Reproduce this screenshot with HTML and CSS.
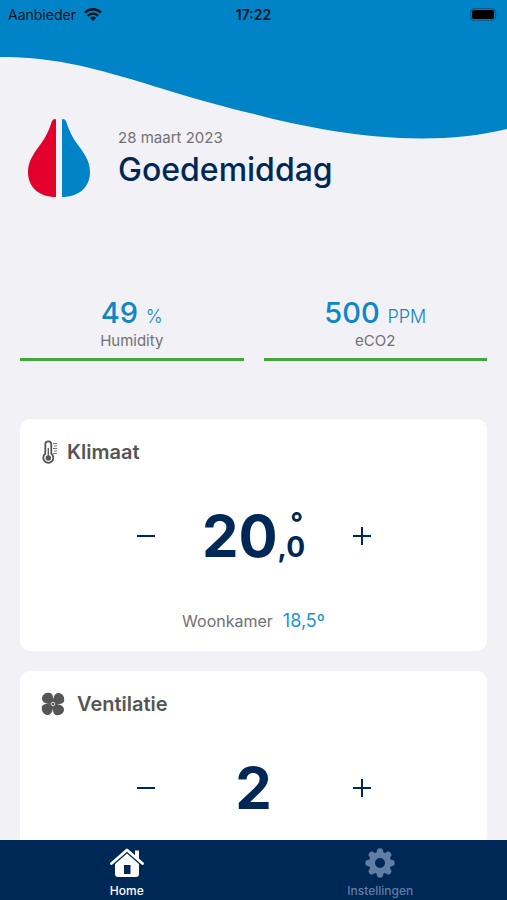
FILE: index.html
```html
<!DOCTYPE html>
<html lang="nl">
<head>
  <meta charset="utf-8">
  <meta name="viewport" content="width=device-width, initial-scale=1">
  <title>Home</title>
  <link rel="stylesheet" href="styles.css">
</head>
<body>
  <div class="app">
    <svg class="wave" viewBox="0 0 507 142" preserveAspectRatio="none" aria-hidden="true">
      <path d="M0 0H507V129C425 149 330 134 254 114C140 87 90 57 0 57Z"/>
    </svg>

    <header class="status">
      <div class="carrier">
        <span>Aanbieder</span>
        <svg class="wifi" viewBox="0 0 18 13" aria-hidden="true">
          <path d="M1 4.6A11.4 11.4 0 0 1 17 4.6M3.8 7.8A7.4 7.4 0 0 1 14.2 7.8" fill="none" stroke="#08131c" stroke-width="2.4"/>
          <path d="M9 13L6 10A4.4 4.4 0 0 1 12 10Z" fill="#08131c"/>
        </svg>
      </div>
      <time class="clock">17:22</time>
      <svg class="battery" viewBox="0 0 29 13" aria-hidden="true">
        <rect x=".7" y=".7" width="24.6" height="11.6" rx="3.6" fill="none" stroke="#075f94" stroke-width="1.3"/>
        <rect x="2" y="2" width="22" height="9" rx="2" fill="#000"/>
        <path d="M27 4.5q1.6 2 0 4z" fill="#075f94"/>
      </svg>
    </header>

    <main class="content">
      <section class="greeting">
        <svg class="logo" viewBox="0 0 64 80" aria-hidden="true">
          <path fill="#e4002d" d="M29 2V79C12 79 1 69 1 54C1 43 7 35 13 27C19 19 22 12 25 3Q26 1 28 1Q29 1 29 2Z"/>
          <path fill="#0084c7" d="M35 2V79C52 79 63 69 63 54C63 43 57 35 51 27C45 19 42 12 39 3Q38 1 36 1Q35 1 35 2Z"/>
        </svg>
        <div class="welcome">
          <p class="date">28 maart 2023</p>
          <h1 class="title">Goedemiddag</h1>
        </div>
      </section>

      <section class="stats">
        <div class="stat">
          <p class="reading">49 <span class="unit">%</span></p>
          <p class="label">Humidity</p>
        </div>
        <div class="stat">
          <p class="reading">500 <span class="unit">PPM</span></p>
          <p class="label">eCO2</p>
        </div>
      </section>

      <section class="card">
        <h2 class="card-title">
          <svg class="thermo" viewBox="0 0 16 24" aria-hidden="true">
            <path d="M4.300 13.800V4.300a3 3 0 0 1 6 0v9.500a5 5 0 1 1-6 0Z" fill="none" stroke="#555" stroke-width="1.8"/>
            <path d="M7.300 8V16" stroke="#555" stroke-width="1.3"/>
            <circle cx="7.300" cy="18" r="2.700" fill="#555"/>
            <path d="M12 3.500h4M13 6h3M12 8.500h4M13 11h3M12 13.500h4" stroke="#777" stroke-width="1"/>
          </svg>
          Klimaat
        </h2>
        <div class="stepper">
          <button class="step" type="button" aria-label="Lager">
            <svg viewBox="0 0 18 18"><path d="M0 9H18"/></svg>
          </button>
          <div class="value">20<span class="decimal"><span class="degree">°</span><span>,0</span></span></div>
          <button class="step" type="button" aria-label="Hoger">
            <svg viewBox="0 0 18 18"><path d="M0 9H18M9 0V18"/></svg>
          </button>
        </div>
        <p class="room">Woonkamer <span class="room-temp">18,5º</span></p>
      </section>

      <section class="card">
        <h2 class="card-title wide">
          <svg class="fan" viewBox="0 0 24 24" aria-hidden="true">
            <g fill="#555">
              <path id="blade" d="M12 12C8 12.500 1 11.500 1 6.500C1 2.500 5 .5 8.500 .8C12.500 1.200 12.300 7 12 12Z"/>
              <use href="#blade" transform="rotate(90 12 12)"/>
              <use href="#blade" transform="rotate(180 12 12)"/>
              <use href="#blade" transform="rotate(270 12 12)"/>
            </g>
            <circle cx="12" cy="12" r="1.800" fill="#555" stroke="#ddd" stroke-width="1"/>
          </svg>
          Ventilatie
        </h2>
        <div class="stepper">
          <button class="step" type="button" aria-label="Lager">
            <svg viewBox="0 0 18 18"><path d="M0 9H18"/></svg>
          </button>
          <div class="value">2</div>
          <button class="step" type="button" aria-label="Hoger">
            <svg viewBox="0 0 18 18"><path d="M0 9H18M9 0V18"/></svg>
          </button>
        </div>
      </section>
    </main>

    <nav class="tabs">
      <a class="tab active" href="#home">
        <svg viewBox="0 0 34 32" aria-hidden="true">
          <path d="M1.500 16.500L17 3L32.500 16.500" fill="none" stroke="currentColor" stroke-width="2.800" stroke-linecap="round" stroke-linejoin="round"/>
          <path d="M25 3.500H29V12L25 8.500Z" fill="currentColor"/>
          <path fill="currentColor" fill-rule="evenodd" d="M17 6.500L29 17V27Q29 30 26 30H8Q5 30 5 27V17ZM14 18V27H20.500V18Z"/>
        </svg>
        Home
      </a>
      <a class="tab" href="#instellingen">
        <svg viewBox="0 0 34 32" aria-hidden="true">
          <g fill="currentColor">
            <path id="tooth" d="M13 7L14.500 2Q17 .5 19.500 2L21 7Z"/>
            <use href="#tooth" transform="rotate(45 17 16)"/>
            <use href="#tooth" transform="rotate(90 17 16)"/>
            <use href="#tooth" transform="rotate(135 17 16)"/>
            <use href="#tooth" transform="rotate(180 17 16)"/>
            <use href="#tooth" transform="rotate(225 17 16)"/>
            <use href="#tooth" transform="rotate(270 17 16)"/>
            <use href="#tooth" transform="rotate(315 17 16)"/>
          </g>
          <circle cx="17" cy="16" r="8" fill="none" stroke="currentColor" stroke-width="6"/>
        </svg>
        Instellingen
      </a>
    </nav>
  </div>
</body>
</html>
```
FILE: styles.css
```css
* {
  box-sizing: border-box;
}

body,
h1,
h2,
p {
  margin: 0;
}

body {
  font-family: Inter, "Liberation Sans", sans-serif;
  background: #f1f1f6;
  color: #707076;
}

.app {
  position: relative;
  display: flex;
  flex-direction: column;
  height: 100vh;
}

.wave {
  position: absolute;
  top: 0;
  left: 0;
  width: 100%;
  height: 142px;
  fill: #0084c7;
}

.status {
  position: relative;
  display: grid;
  grid-template-columns: 1fr auto 1fr;
  align-items: center;
  flex: none;
  height: 28px;
  padding: 0 8px;
  font-size: 14px;
  color: #08131c;
}

.carrier {
  display: flex;
  align-items: center;
  gap: 8px;
}

.wifi {
  width: 18px;
  height: 13px;
}

.clock {
  font-weight: 600;
}

.battery {
  width: 29px;
  height: 13px;
  justify-self: end;
}

.content {
  position: relative;
  flex: 1;
  min-height: 0;
  overflow: hidden;
  padding: 90px 20px 0;
}

.greeting {
  display: flex;
  align-items: center;
  gap: 27px;
  padding-left: 7px;
}

.logo {
  flex: none;
  width: 64px;
  height: 80px;
}

.welcome {
  padding-top: 4px;
}

.date {
  font-size: 15px;
  line-height: 20px;
}

.title {
  font-size: 32px;
  font-weight: 500;
  line-height: 44px;
  color: #002856;
}

.stats {
  display: grid;
  grid-template-columns: 1fr 1fr;
  gap: 20px;
  margin-top: 101px;
}

.stat {
  padding-bottom: 7px;
  border-bottom: 3px solid #41a83e;
  text-align: center;
}

.reading {
  font-size: 29px;
  font-weight: 500;
  line-height: 28px;
  color: #0f86c5;
}

.unit {
  font-size: 18px;
  font-weight: 300;
}

.label {
  font-size: 15px;
  line-height: 20px;
}

.card {
  min-height: 232px;
  padding: 20px 21px 18px;
  border-radius: 10px;
  background: #fff;
}

.stats + .card {
  margin-top: 58px;
}

.card + .card {
  margin-top: 20px;
}

.card-title {
  display: flex;
  align-items: center;
  gap: 10px;
  font-size: 20px;
  font-weight: 600;
  line-height: 26px;
  color: #555;
}

.card-title.wide {
  gap: 12px;
}

.thermo {
  width: 16px;
  height: 24px;
}

.fan {
  width: 24px;
  height: 24px;
}

.stepper {
  display: grid;
  grid-template-columns: 44px 172px 44px;
  justify-content: center;
  align-items: center;
  margin-top: 36px;
}

.step {
  display: grid;
  place-items: center;
  height: 44px;
  padding: 0;
  border: 0;
  background: none;
  color: #002856;
}

.step svg {
  width: 18px;
  height: 18px;
  fill: none;
  stroke: currentColor;
  stroke-width: 2;
}

.value {
  display: flex;
  justify-content: center;
  align-items: baseline;
  font-size: 58px;
  font-weight: 700;
  line-height: 70px;
  color: #002856;
}

.decimal {
  position: relative;
  font-size: 28px;
  line-height: 30px;
}

.degree {
  position: absolute;
  right: 2px;
  bottom: 24px;
}

.room {
  display: flex;
  justify-content: center;
  align-items: baseline;
  gap: 10px;
  margin-top: 38px;
  font-size: 16px;
  line-height: 24px;
}

.room-temp {
  font-size: 18px;
  color: #2094d0;
}

.tabs {
  position: relative;
  display: grid;
  grid-template-columns: 1fr 1fr;
  flex: none;
  height: 60px;
  background: #002856;
}

.tab {
  display: flex;
  flex-direction: column;
  align-items: center;
  gap: 4px;
  padding-top: 7px;
  font-size: 12px;
  font-weight: 500;
  line-height: 16px;
  color: #607da3;
  text-decoration: none;
}

.tab svg {
  width: 34px;
  height: 32px;
}

.active {
  color: #fff;
}
```
